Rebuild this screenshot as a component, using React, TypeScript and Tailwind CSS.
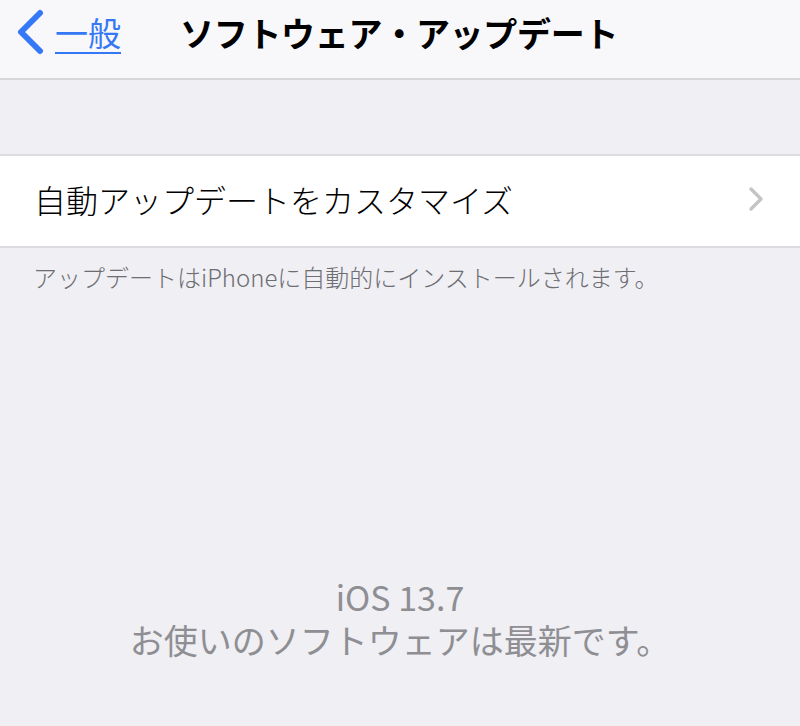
import { ChevronRight } from 'lucide-react';

const jp = { fontFamily: '"Noto Sans CJK JP", "Noto Sans", sans-serif' };

// iOS-style back chevron
function BackChevron() {
  return (
    <svg width="32" height="46" viewBox="0 0 32 46" fill="none">
      <path d="M26 4 L7 23 L26 42" stroke="#3478f6" strokeWidth="6" strokeLinecap="round" strokeLinejoin="round" />
    </svg>
  );
}

export default function App() {
  return (
    <div className="w-[800px] h-[726px] bg-[#efeff4] flex flex-col overflow-hidden" style={jp}>
      {/* Navigation bar */}
      <header className="relative h-[80px] shrink-0 bg-[#f8f8fa] border-b-2 border-[#d6d6da] flex items-center">
        <div className="flex items-center pl-[14px] -mt-[14px]">
          <BackChevron />
          <span className="ml-[9px] text-[33px] leading-none text-[#3478f6] underline underline-offset-[6px] decoration-[1.5px]">
            一般
          </span>
        </div>
        <h1 className="absolute left-[180px] top-[12px] text-[34px] leading-[42px] font-bold text-black tracking-[-0.3px]">
          ソフトウェア・アップデート
        </h1>
      </header>

      {/* Settings group */}
      <div className="mt-[74px] bg-white border-y-2 border-[#dcdce0] h-[94px] flex items-center justify-between pl-[34px] pr-[24px]">
        <span className="text-[32px] leading-none text-black font-light -mt-[4px]">自動アップデートをカスタマイズ</span>
        <ChevronRight size={40} strokeWidth={2} color="#c4c4c7" className="-mt-[4px]" />
      </div>
      <p className="mt-[13px] pl-[33px] text-[24px] leading-[32px] text-[#6d6d72] font-light">
        アップデートはiPhoneに自動的にインストールされます。
      </p>

      {/* Version status */}
      <div className="mt-[283px] flex flex-col items-center text-[#8e8e93]">
        <span className="text-[34px] leading-[42px]">iOS 13.7</span>
        <span className="text-[34px] leading-[44px]">お使いのソフトウェアは最新です。</span>
      </div>
    </div>
  );
}
